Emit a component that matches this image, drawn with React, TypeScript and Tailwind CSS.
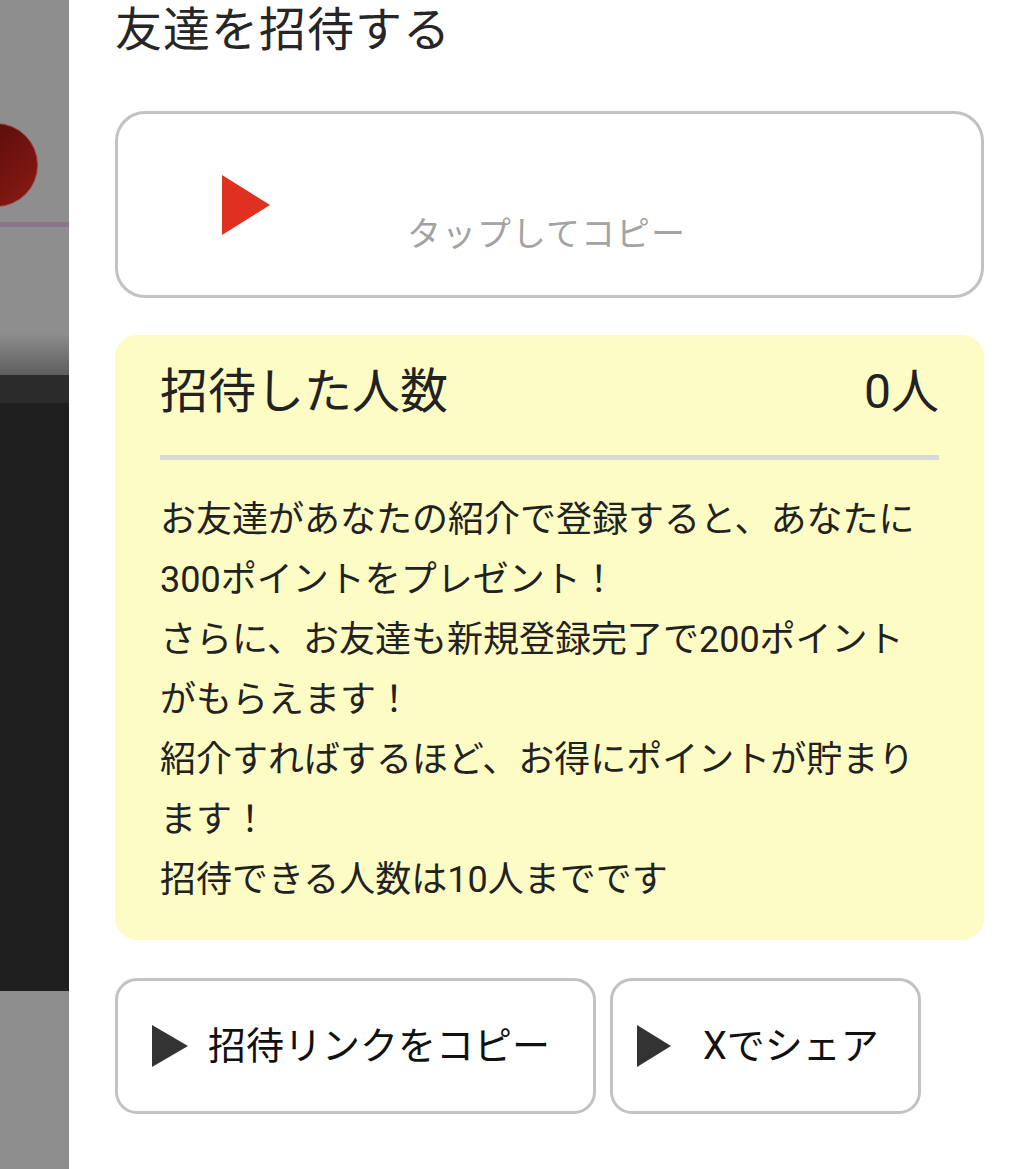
import React from "react";

const font = { fontFamily: 'Roboto, "Noto Sans CJK JP", sans-serif' };

function Tri({ className, color }: { className: string; color: string }) {
  return (
    <svg className={className} viewBox="0 0 48 60" preserveAspectRatio="none">
      <polygon points="0,0 48,30 0,60" fill={color} />
    </svg>
  );
}

export default function App() {
  return (
    <div className="flex w-[1029px] h-[1169px] overflow-hidden bg-white" style={font}>
      {/* left backdrop strip */}
      <div className="relative w-[69px] shrink-0 flex flex-col">
        <div className="h-[222px] bg-[#8e8e8e]" />
        <div className="h-[5px] bg-[#887686]" />
        <div className="h-[108px] bg-[#8e8e8e]" />
        <div className="h-[40px] bg-gradient-to-b from-[#8c8c8c] to-[#5e5e5e]" />
        <div className="h-[28px] bg-[#2b2b2b]" />
        <div className="h-[588px] bg-[#1f1f1f]" />
        <div className="flex-1 bg-[#8d8d8d]" />
        <div className="absolute left-[-46px] top-[123px] w-[84px] h-[84px] rounded-full bg-gradient-to-br from-[#4f0a0a] to-[#8c1a14] border border-[#a0403c]" />
      </div>

      {/* main panel */}
      <div className="flex-1 flex flex-col pl-[46px] pr-[45px]">
        <h1 className="text-[47px] leading-[56px] text-[#262626] mt-[2px] tracking-[1px]">友達を招待する</h1>

        <div className="mt-[53px] h-[187px] rounded-[30px] border-[3px] border-[#c2c2c2] flex items-center pl-[104px]">
          <Tri className="w-[48px] h-[60px] shrink-0" color="#e03120" />
          <div className="ml-[137px] pt-[60px] text-[34px] text-[#a3a3a3] tracking-[1px]">タップしてコピー</div>
        </div>

        <div className="mt-[37px] rounded-[22px] bg-[#fdfcc4] px-[45px] pt-[29px] pb-[30px]">
          <div className="flex items-center justify-between text-[48px] leading-[56px] text-[#222]">
            <span>招待した人数</span>
            <span>0人</span>
          </div>
          <div className="mt-[35px] h-[5px] bg-[#dadbd6]" />
          <div className="mt-[30px] text-[36px] leading-[60px] text-[#222]">
            <p>お友達があなたの紹介で登録すると、あなたに</p>
            <p>300ポイントをプレゼント！</p>
            <p>さらに、お友達も新規登録完了で200ポイント</p>
            <p>がもらえます！</p>
            <p>紹介すればするほど、お得にポイントが貯まり</p>
            <p>ます！</p>
            <p>招待できる人数は10人までです</p>
          </div>
        </div>

        <div className="mt-[38px] flex gap-[14px]">
          <div className="w-[481px] h-[136px] rounded-[22px] border-[3px] border-[#c2c2c2] flex items-center pl-[34px]">
            <Tri className="w-[36px] h-[42px] shrink-0" color="#333333" />
            <span className="ml-[20px] text-[38px] text-[#111]">招待リンクをコピー</span>
          </div>
          <div className="w-[311px] h-[136px] rounded-[22px] border-[3px] border-[#c2c2c2] flex items-center pl-[24px]">
            <Tri className="w-[34px] h-[42px] shrink-0" color="#333333" />
            <span className="ml-[32px] text-[38px] text-[#111]">Xでシェア</span>
          </div>
        </div>
      </div>
    </div>
  );
}
